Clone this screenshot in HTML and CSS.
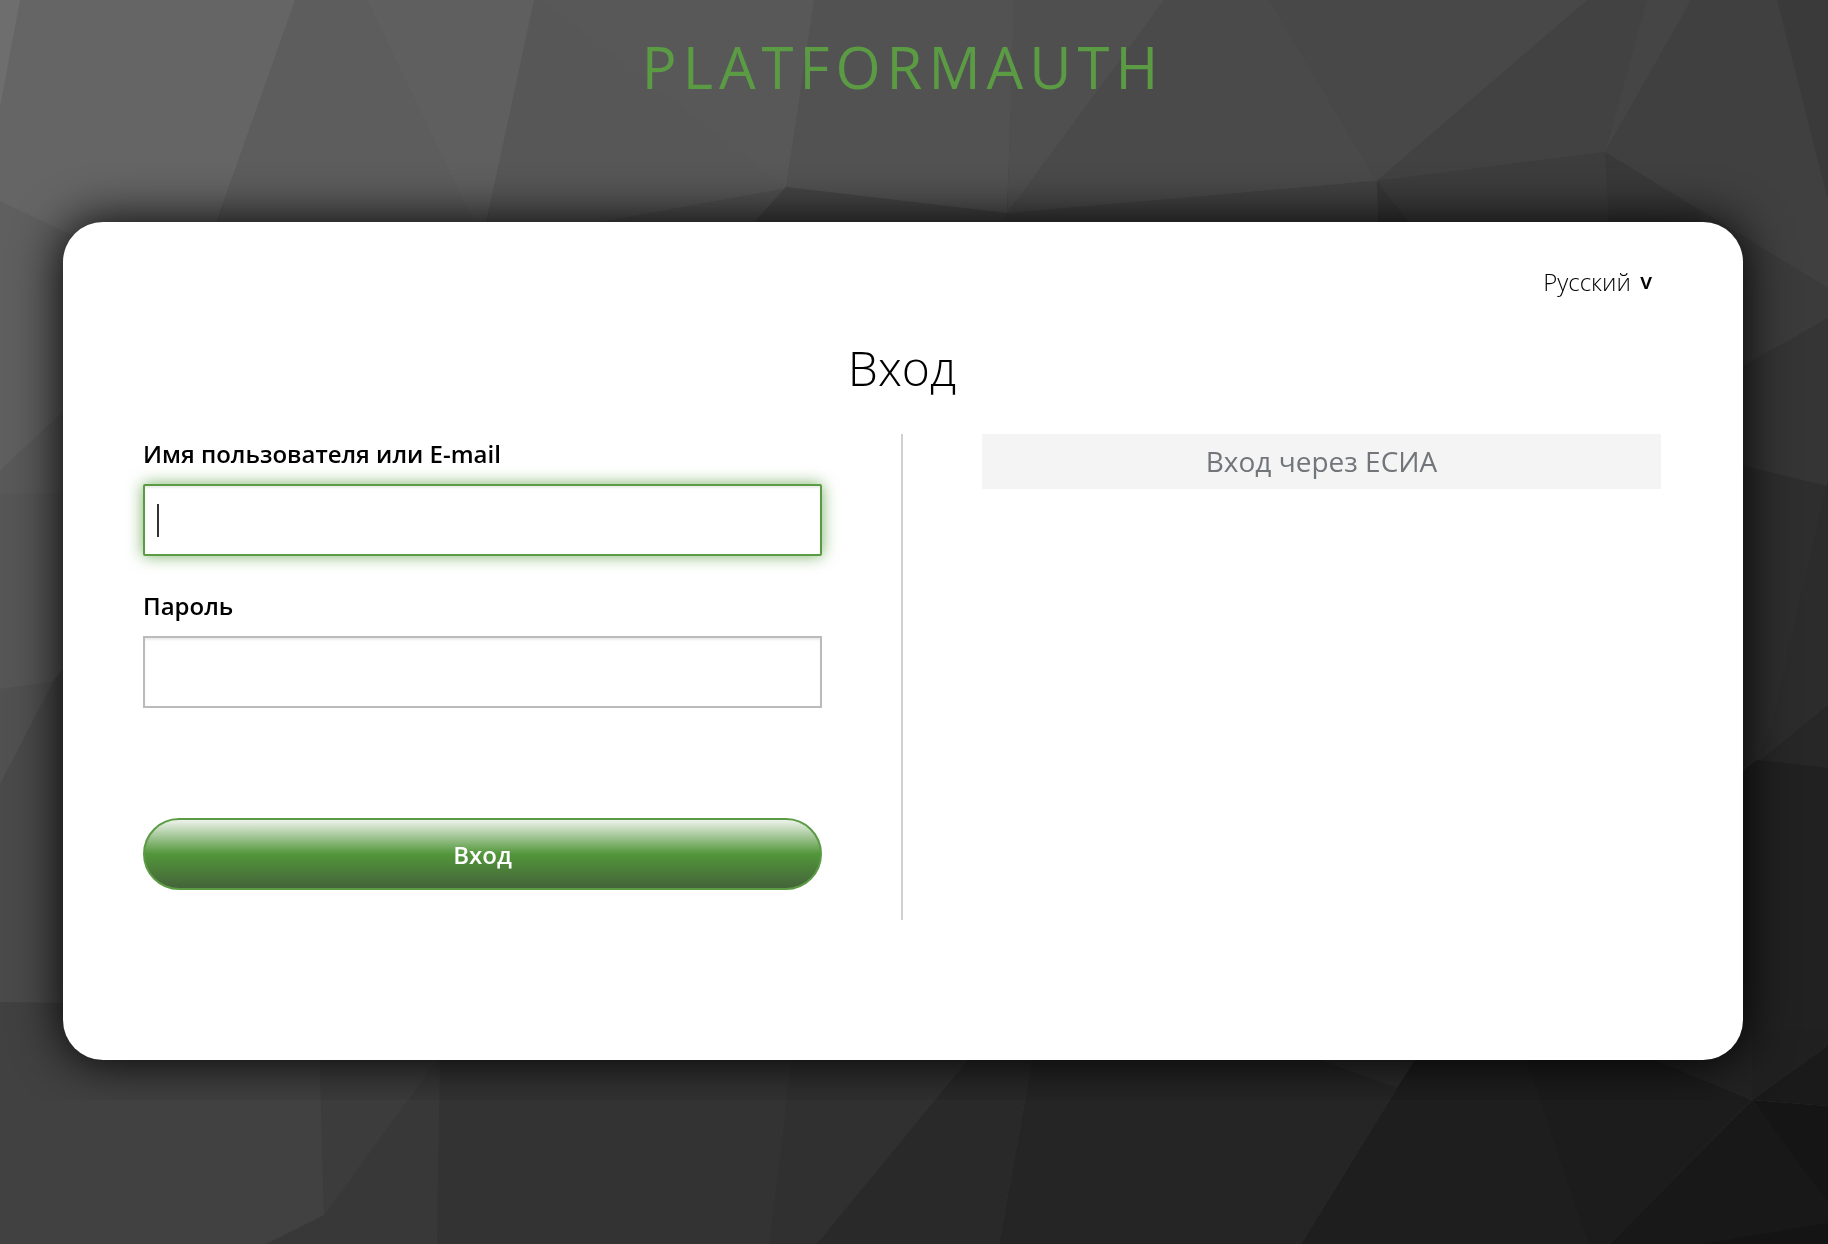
FILE: index.html
```html
<!DOCTYPE html>
<html lang="ru">
<head>
    <meta charset="UTF-8">
    <meta name="viewport" content="width=device-width, initial-scale=1">
    <title>Вход</title>
    <link rel="stylesheet" href="styles.css">
</head>
<body>
    <svg class="page-bg" viewBox="0 0 1828 1244" preserveAspectRatio="none" aria-hidden="true">
        <!-- top -->
        <polygon fill="#656565" points="0,0 296,0 216,224 300,500 0,500"/>
        <polygon fill="#6e6e6e" points="0,0 20,0 0,107"/>
        <polygon fill="#5d5d5d" points="295,0 535,0 486,224 300,500 216,224"/>
        <polygon fill="#5f5f5f" points="367,0 535,0 486,224 475,224"/>
        <polygon fill="#575757" points="534,0 815,0 786,188 700,400 486,224"/>
        <polygon fill="#585858" points="541,0 815,0 786,188"/>
        <polygon fill="#525252" points="814,0 1015,0 1007,214 786,188"/>
        <polygon fill="#4f4f4f" points="1014,0 1165,0 1007,214"/>
        <polygon fill="#4a4a4a" points="1164,0 1270,0 1377,181 1007,214"/>
        <polygon fill="#484848" points="1269,0 1588,0 1377,181"/>
        <polygon fill="#424242" points="1587,0 1648,0 1605,152 1377,181"/>
        <polygon fill="#454545" points="1647,0 1692,0 1605,152"/>
        <polygon fill="#404040" points="1691,0 1828,0 1828,290 1605,152"/>
        <polygon fill="#3a3a3a" points="1777,0 1828,0 1828,200"/>
        <polygon fill="#505050" points="786,188 590,224 590,260 760,260"/>
        <polygon fill="#454545" points="786,187 1007,213 1000,260 720,260"/>
        <polygon fill="#424242" points="1007,213 1377,181 1380,260 980,260"/>
        <polygon fill="#3d3d3d" points="1377,181 1605,152 1611,260 1380,260"/>
        <polygon fill="#383838" points="1377,181 1430,250 1379,250"/>
        <polygon fill="#393939" points="1605,152 1828,289 1828,340 1611,260"/>

        <!-- left side -->
        <polygon fill="#5f5f5f" points="0,201 120,258 120,382 0,470"/>
        <polygon fill="#595959" points="0,470 120,359 120,500 0,500"/>
        <polygon fill="#565656" points="0,494 120,492 120,800 0,800"/>
        <polygon fill="#515151" points="0,689 120,672 120,800 0,800"/>
        <polygon fill="#4a4a4a" points="0,784 54,680 120,600 120,1010 0,1010"/>

        <!-- right side -->
        <polygon fill="#3b3b3b" points="1700,210 1828,288 1828,318 1700,390"/>
        <polygon fill="#353535" points="1700,390 1828,318 1828,486 1700,455"/>
        <polygon fill="#2e2e2e" points="1700,455 1828,486 1772,720 1700,900"/>
        <polygon fill="#2c2c2c" points="1828,480 1828,800 1740,800 1772,720"/>
        <polygon fill="#272727" points="1828,705 1700,810 1700,1000 1828,1000"/>
        <polygon fill="#212121" points="1757,760 1828,768 1828,1045 1700,1075 1700,805"/>

        <!-- bottom -->
        <polygon fill="#414141" points="0,1002 319,1006 324,1215 266,1244 0,1244"/>
        <polygon fill="#3c3c3c" points="318,1000 460,1000 437,1060 324,1215"/>
        <polygon fill="#383838" points="437,1060 441,1060 437,1244 266,1244 324,1215"/>
        <polygon fill="#333333" points="441,1000 800,1000 769,1244 437,1244"/>
        <polygon fill="#303030" points="799,1000 1100,1000 900,1244 769,1244"/>
        <polygon fill="#292929" points="968,1060 1034,1050 999,1244 817,1244"/>
        <polygon fill="#252525" points="1034,1050 1420,1050 1397,1088 1301,1244 999,1244"/>
        <polygon fill="#2b2b2b" points="1320,1060 1320,1040 1440,1040 1397,1088"/>
        <polygon fill="#1e1e1e" points="1397,1088 1428,1040 1524,1040 1588,1244 1301,1244"/>
        <polygon fill="#1c1c1c" points="1520,1040 1656,1060 1752,1100 1609,1244 1588,1244"/>
        <polygon fill="#222222" points="1630,1050 1752,1040 1752,1100"/>
        <polygon fill="#202020" points="1752,1030 1828,1030 1828,1045 1752,1100"/>
        <polygon fill="#1a1a1a" points="1752,1100 1828,1045 1828,1106"/>
        <polygon fill="#181818" points="1752,1100 1828,1200 1828,1244 1609,1244"/>
        <polygon fill="#151515" points="1752,1100 1828,1106 1828,1202"/>
        <polygon fill="#141414" points="1705,1244 1828,1223 1828,1244"/>
    </svg>

    <div class="login-page">
        <header class="header">PLATFORMAUTH</header>

        <main class="card">
            <div class="locale">
                <label class="locale-label">
                    <select class="locale-select" aria-label="Язык">
                        <option>Русский</option>
                    </select>
                    <span class="locale-arrow">v</span>
                </label>
            </div>

            <h1 class="title">Вход</h1>

            <div class="content">
                <form class="login-form">
                    <div class="form-group">
                        <label class="form-label" for="username">Имя пользователя или E-mail</label>
                        <input class="form-control" id="username" name="username" type="text" autocomplete="off" autofocus>
                    </div>
                    <div class="form-group">
                        <label class="form-label" for="password">Пароль</label>
                        <input class="form-control" id="password" name="password" type="password" autocomplete="off">
                    </div>
                    <button class="btn-login" type="submit">Вход</button>
                </form>
                <div class="divider"></div>
                <div class="social">
                    <a class="social-link" href="#">Вход через ЕСИА</a>
                </div>
            </div>
        </main>
    </div>
    <script>
    document.getElementById('username').focus();
    </script>
</body>
</html>
```
FILE: styles.css
```css
* {
    box-sizing: border-box;
}

body {
    margin: 0;
    background-color: #404040;
    color: #000;
    font-family: "Open Sans", "Noto Sans", sans-serif;
    font-size: 24px;
    line-height: 40px;
}

.page-bg {
    position: fixed;
    top: 0;
    left: 0;
    z-index: -1;
    width: 100%;
    height: 100%;
}

.login-page {
    padding: 0 85px 40px 63px;
}

.header {
    padding: 27px 0 115px;
    color: #5b9b44;
    font-size: 58px;
    line-height: 80px;
    letter-spacing: 6px;
    text-align: center;
    text-transform: uppercase;
}

.card {
    padding: 40px 82px 140px 80px;
    border-radius: 40px;
    background-color: #fff;
    box-shadow: 0 0 50px 0 #000;
}

.locale {
    display: flex;
    justify-content: flex-end;
    padding-right: 9px;
}

.locale-label {
    display: flex;
    align-items: flex-start;
    gap: 9px;
}

.locale-select {
    margin: 0;
    padding: 0;
    border: 0;
    background: none;
    color: #000;
    font-family: inherit;
    font-size: 24px;
    font-weight: 300;
    line-height: 40px;
    appearance: none;
}

.locale-arrow {
    font-size: 22px;
    font-weight: 600;
    line-height: 36px;
}

.title {
    margin: 32px 0;
    font-size: 48px;
    font-weight: 300;
    line-height: 68px;
    text-align: center;
}

.content {
    display: grid;
    grid-template-columns: 1fr 2px 1fr;
    gap: 79px;
}

.login-form {
    padding-bottom: 30px;
}

.form-group {
    margin-bottom: 30px;
}

.form-label {
    display: block;
    margin-bottom: 10px;
    font-weight: 600;
}

.form-control {
    display: block;
    width: 100%;
    height: 72px;
    padding: 0 12px;
    border: 2px solid #bbb;
    border-radius: 0;
    background-color: #fff;
    box-shadow: inset 0 2px 2px rgba(3, 3, 3, .075);
    font-family: inherit;
    font-size: 24px;
}

.form-control:focus {
    outline: 0;
    border-color: #5b9b44;
    border-radius: 2px;
    box-shadow: inset 0 2px 2px rgba(3, 3, 3, .075), 0 0 16px rgba(90, 158, 67, .8);
}

#username:focus:not(:valid),
#username:focus {
    background: linear-gradient(#333, #333) 12px center / 2px 33px no-repeat #fff;
    caret-color: transparent;
}

.btn-login {
    display: block;
    width: 100%;
    height: 72px;
    margin-top: 110px;
    border: 2px solid #5b9b44;
    border-radius: 36px;
    background: linear-gradient(to bottom, #eef3ec 0%, #52963a 50%, #44633a 100%);
    color: #fff;
    font-family: inherit;
    font-size: 24px;
    font-weight: 600;
    cursor: pointer;
}

.divider {
    background-color: #d1d1d1;
}

.social-link {
    display: block;
    padding: 6px;
    background-color: #f4f4f4;
    color: #72767b;
    font-size: 28px;
    line-height: 43px;
    text-align: center;
    text-decoration: none;
}
```
